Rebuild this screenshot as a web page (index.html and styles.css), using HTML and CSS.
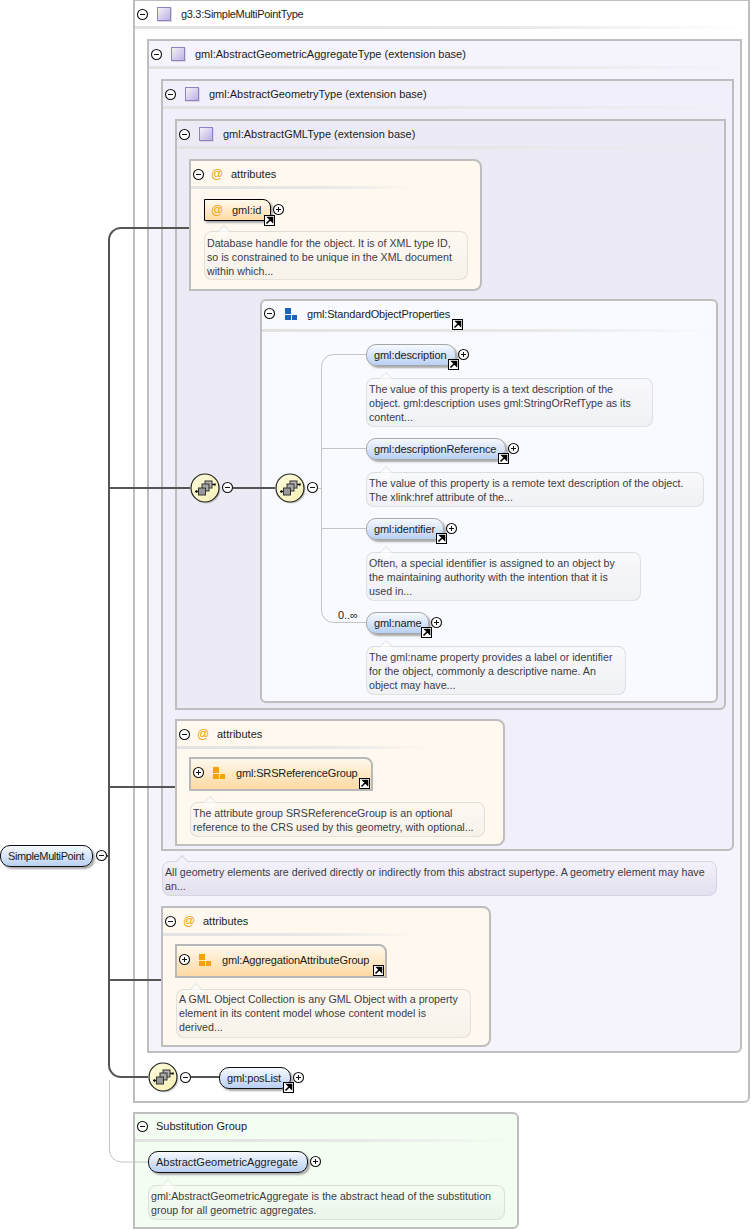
FILE: index.html
```html
<!DOCTYPE html>
<html lang="en">
<head>
<meta charset="utf-8">
<title>SimpleMultiPoint</title>
<link rel="stylesheet" href="styles.css">
</head>
<body>
<svg class="defs" width="0" height="0" aria-hidden="true">
  <defs>
    <symbol id="minus" viewBox="0 0 13 13"><circle cx="6.5" cy="6.5" r="5" fill="#fff" stroke="#111" stroke-width="1.1"/><path d="M4 6.5h5" stroke="#111" stroke-width="1"/></symbol>
    <symbol id="plus" viewBox="0 0 13 13"><circle cx="6.5" cy="6.5" r="5" fill="#fff" stroke="#111" stroke-width="1.1"/><path d="M4 6.5h5M6.5 4v5" stroke="#111" stroke-width="1"/></symbol>
    <symbol id="link" viewBox="0 0 11 11"><rect x=".5" y=".5" width="10" height="10" fill="#fff" stroke="#000"/><path d="M2.5 8.5 6.5 4.5M4.2 2.5h4.3v4.3z" fill="#000" stroke="#000" stroke-width="1.6"/></symbol>
    <linearGradient id="seqfill" x1="0" y1="0" x2="1" y2="1"><stop offset="0" stop-color="#fdfbdc"/><stop offset="1" stop-color="#f6f0b4"/></linearGradient>
    <symbol id="seq" viewBox="0 0 32 32">
      <circle cx="16.5" cy="16.5" r="14" fill="#a8a8a8" opacity=".55"/>
      <circle cx="15" cy="15" r="14" fill="url(#seqfill)" stroke="#222" stroke-width="1.2"/>
      <path d="M5 18.500h4M21 11.500h4.500" stroke="#111" stroke-width="1.4"/>
      <path d="M6 18.500h1M24.500 11.500h1" stroke="#111" stroke-width="2.600"/>
      <rect x="15" y="8" width="7" height="7" fill="#b4b4b4" stroke="#333"/>
      <rect x="12" y="11" width="7" height="7" fill="#a8a8a8" stroke="#333"/>
      <rect x="8.500" y="15" width="7" height="7" fill="#999" stroke="#333"/>
    </symbol>
  </defs>
</svg>
<main class="canvas">
  <div class="frame f1">
    <header class="head"><svg class="tog"><use href="#minus"/></svg><i class="ticon"></i><span class="ttl narrow">g3.3:SimpleMultiPointType</span></header>
    <section class="frame f2">
      <header class="head"><svg class="tog"><use href="#minus"/></svg><i class="ticon"></i><span class="ttl">gml:AbstractGeometricAggregateType (extension base)</span></header>
      <section class="frame f3">
        <header class="head"><svg class="tog"><use href="#minus"/></svg><i class="ticon"></i><span class="ttl">gml:AbstractGeometryType (extension base)</span></header>
        <section class="frame f4">
          <header class="head"><svg class="tog"><use href="#minus"/></svg><i class="ticon"></i><span class="ttl">gml:AbstractGMLType (extension base)</span></header>
          <section class="frame attr a1">
            <header class="head short"><svg class="tog"><use href="#minus"/></svg><b class="at">@</b><span class="ttl">attributes</span></header>
            <div class="anode"><b class="at">@</b><span>gml:id</span><svg class="lnk"><use href="#link"/></svg><svg class="after"><use href="#plus"/></svg></div>
            <p class="doc d-id">Database handle for the object. It is of XML type ID,<br>so is constrained to be unique in the XML document<br>within which...</p>
          </section>
          <div class="seqrow">
            <svg class="seq"><use href="#seq"/></svg><svg class="tog seqtog"><use href="#minus"/></svg>
            <svg class="seq seq2"><use href="#seq"/></svg><svg class="tog seqtog over"><use href="#minus"/></svg>
            <section class="frame props">
              <header class="head"><svg class="tog"><use href="#minus"/></svg><i class="gicon blue"><u></u><u></u><u></u></i><span class="ttl">gml:StandardObjectProperties</span><svg class="lnk lnk-head"><use href="#link"/></svg></header>
              <div class="list">
                <div class="el opt wide">gml:description<svg class="lnk"><use href="#link"/></svg><svg class="after"><use href="#plus"/></svg></div>
                <p class="doc d1">The value of this property is a text description of the<br>object. gml:description uses gml:StringOrRefType as its<br>content...</p>
                <div class="el opt wide">gml:descriptionReference<svg class="lnk"><use href="#link"/></svg><svg class="after"><use href="#plus"/></svg></div>
                <p class="doc d2">The value of this property is a remote text description of the object.<br>The xlink:href attribute of the...</p>
                <div class="el opt">gml:identifier<svg class="lnk"><use href="#link"/></svg><svg class="after"><use href="#plus"/></svg></div>
                <p class="doc d3">Often, a special identifier is assigned to an object by<br>the maintaining authority with the intention that it is<br>used in...</p>
                <div class="el opt nm">gml:name<svg class="lnk"><use href="#link"/></svg><svg class="after"><use href="#plus"/></svg><span class="card">0..∞</span></div>
                <p class="doc d4">The gml:name property provides a label or identifier<br>for the object, commonly a descriptive name. An<br>object may have...</p>
              </div>
            </section>
          </div>
        </section>
        <section class="frame attr a2">
          <header class="head short"><svg class="tog"><use href="#minus"/></svg><b class="at">@</b><span class="ttl">attributes</span></header>
          <div class="gnode g-srs"><svg class="tog"><use href="#plus"/></svg><i class="gicon"><u></u><u></u><u></u></i><span>gml:SRSReferenceGroup</span><svg class="lnk"><use href="#link"/></svg></div>
          <p class="doc d-srs">The attribute group SRSReferenceGroup is an optional<br>reference to the CRS used by this geometry, with optional...</p>
        </section>
      </section>
      <p class="doc lilac">All geometry elements are derived directly or indirectly from this abstract supertype. A geometry element may have<br>an...</p>
      <section class="frame attr a3">
        <header class="head short"><svg class="tog"><use href="#minus"/></svg><b class="at">@</b><span class="ttl">attributes</span></header>
        <div class="gnode g-agg"><svg class="tog"><use href="#plus"/></svg><i class="gicon"><u></u><u></u><u></u></i><span>gml:AggregationAttributeGroup</span><svg class="lnk"><use href="#link"/></svg></div>
        <p class="doc d-agg">A GML Object Collection is any GML Object with a property<br>element in its content model whose content model is<br>derived...</p>
      </section>
    </section>
    <div class="posrow">
      <svg class="seq"><use href="#seq"/></svg><svg class="tog seqtog"><use href="#minus"/></svg>
      <div class="el req pos">gml:posList<svg class="lnk"><use href="#link"/></svg><svg class="after"><use href="#plus"/></svg></div>
    </div>
  </div>
  <section class="frame sub">
    <header class="head"><svg class="tog"><use href="#minus"/></svg><span class="ttl">Substitution Group</span></header>
    <div class="el req abs">AbstractGeometricAggregate<svg class="after"><use href="#plus"/></svg></div>
    <p class="doc d-sub">gml:AbstractGeometricAggregate is the abstract head of the substitution<br>group for all geometric aggregates.</p>
  </section>
  <svg class="wires" width="751" height="1230" aria-hidden="true">
    <g fill="none" stroke="#c4c4c4" stroke-width="1">
      <path d="M109.500 1080V1150a12 12 0 0 0 12 12H148"/>
      <path d="M366 354.500H333.500a12 12 0 0 0-12 12V610.500a12 12 0 0 0 12 12H366"/>
      <path d="M321 448.500H366M321 528.500H366M318 488.500H321"/>
    </g>
    <g fill="none" stroke="#555" stroke-width="2">
      <path d="M189 228H121a12 12 0 0 0-12 12V1065a12 12 0 0 0 12 12H148"/>
      <path d="M109 488H190M109 787H175M109 980H161M106 856H109M233 488H275M191 1077H219"/>
    </g>
  </svg>
  <div class="el req rootel">SimpleMultiPoint<svg class="after rootplus"><use href="#minus"/></svg></div>
</main>
</body>
</html>
```
FILE: styles.css
```css
* { box-sizing: border-box; }
html, body { margin: 0; padding: 0; background: #fff; }
.defs { position: absolute; }
.canvas {
  position: relative;
  width: 751px;
  height: 1230px;
  overflow: hidden;
  font: 11px/14px "Liberation Sans", Arial, sans-serif;
  color: #1c1c1c;
}
.frame { border: 2px solid #bebebe; }
.f1 {
  width: 617px;
  height: 1104px;
  margin: -1px 0 0 133px;
  background: #fff;
  border-radius: 0 0 6px 0;
}
.f2 {
  width: 595px;
  height: 1014px;
  margin: 10px 0 0 12px;
  background: #f5f3fb;
  border-radius: 0 0 6px 0;
}
.f3 {
  width: 573px;
  height: 772px;
  margin: 10px 0 0 12px;
  background: #f1eff9;
  border-radius: 0 0 6px 0;
}
.f4 {
  width: 551px;
  height: 591px;
  margin: 10px 0 0 12px;
  background: #ecebf5;
  border-radius: 0 0 6px 0;
}
.head {
  position: relative;
  display: flex;
  align-items: center;
  height: 28px;
  padding: 0 0 2px 1px;
  background: linear-gradient(90deg, #e2e2e2, #e8e8e8 60%, rgba(232, 232, 232, 0)) left bottom / 100% 3px no-repeat;
  font-size: 11px;
}
.sub .head { padding-bottom: 4px; }
.short { background-size: 78% 3px; }
.tog { width: 13px; height: 13px; flex: none; }
.ticon {
  flex: none;
  width: 14px;
  height: 14px;
  margin-left: 8px;
  border: 1px solid #9080c4;
  background: linear-gradient(135deg, #f4f2fb, #bcb0e0);
  box-shadow: 1px 1px 0 #d8d8d8;
}
.ttl { margin-left: 10px; white-space: nowrap; }
.narrow { letter-spacing: -.32px; }
.sub .ttl { margin-left: 7px; }
.at { width: 12px; margin-left: 6px; font-weight: 400; font-size: 12px; color: #f0a010; text-align: center; }
.attr { background: #fef8ee; border-radius: 0 8px 8px 0; }
.a1 { width: 293px; height: 132px; margin: 10px 0 0 12px; }
.a2 { width: 330px; height: 127px; margin: 9px 0 0 12px; }
.a3 { width: 330px; height: 141px; margin: 10px 0 0 12px; }
.attr .ttl { margin-left: 8px; }
.anode {
  position: relative;
  display: flex;
  align-items: center;
  width: 67px;
  height: 22px;
  margin: 10px 0 0 13px;
  border: 1px solid #000;
  border-radius: 0 8px 0 0;
  background: linear-gradient(#fff9ef, #ffdba2);
  box-shadow: 2px 2px 2px #aaa;
}
.anode .at { margin-right: 9px; }
.anode .lnk { right: -5px; bottom: -6px; }
.doc {
  position: relative;
  margin: 0;
  padding: 3px 0 0 2px;
  border: 1px solid rgba(160, 160, 160, .25);
  border-radius: 8px;
  background: linear-gradient(rgba(255, 255, 255, .2), rgba(200, 200, 200, .12));
  font-size: 10.67px;
  line-height: 14px;
  color: #3c3c44;
  white-space: nowrap;
}
.doc::before {
  content: "";
  position: absolute;
  top: -5px;
  left: 14px;
  width: 9px;
  height: 9px;
  transform: rotate(45deg);
  background: #fff;
  border-top: 1px solid #ddd;
  border-left: 1px solid #ddd;
  opacity: .6;
}
.d-id { width: 264px; height: 49px; margin: 10px 0 0 13px; padding-top: 4px; background-color: #fdf7ee; }
.seqrow { display: flex; align-items: flex-start; margin: 8px 0 0 13px; }
.seq { width: 32px; height: 32px; flex: none; margin-top: 174px; position: relative; z-index: 2; }
.seqtog { margin: 182px 0 0 -1px; position: relative; z-index: 2; }
.seq2 { margin-left: 41px; }
.props {
  width: 458px;
  height: 404px;
  margin-left: -59px;
  background: #f9faff;
  border-radius: 6px;
  flex: none;
}
.props .head { height: 31px; padding-bottom: 6px; }
.gicon {
  flex: none;
  position: relative;
  display: block;
  width: 12px;
  height: 12px;
  margin-left: 9px;
}
.gicon u { position: absolute; background: #f5a00f; }
.gicon.blue u { background: #1e63b5; }
.gicon u:nth-child(1) { left: 0; top: 0; width: 6px; height: 6px; }
.gicon u:nth-child(2) { left: 0; bottom: 0; width: 6px; height: 5px; }
.gicon u:nth-child(3) { right: 0; bottom: 0; width: 5px; height: 5px; }
.props .ttl { margin-left: 10px; letter-spacing: -.15px; }
.lnk { position: absolute; width: 11px; height: 11px; }
.lnk-head { left: 190px; top: 18px; }
.list { padding: 12px 0 0 104px; }
.el {
  position: relative;
  display: inline-flex;
  align-items: center;
  height: 22px;
  padding: 0 8px 0 7px;
  border-radius: 10px;
  background: linear-gradient(#f6f9fe, #b9d0f2);
  box-shadow: 2px 2px 2px #a9a9a9;
  white-space: nowrap;
}
.opt { border: 1px solid #a6a6a6; letter-spacing: -.1px; }
.wide { padding-right: 9px; }
.nm { padding-right: 6px; }
.req { border: 1px solid #111; }
.el .lnk { right: -4px; bottom: -5px; }
.after { position: absolute; width: 13px; height: 13px; right: -15px; top: 3px; }
.list .doc { margin-top: 12px; margin-bottom: 11px; background-color: #f6f7fb; }
.d1 { width: 287px; height: 49px; }
.d2 { width: 338px; height: 35px; }
.d3 { width: 275px; height: 49px; }
.d4 { width: 260px; height: 49px; }
.card { position: absolute; left: -29px; top: -5px; font-size: 11px; }
.gnode {
  position: relative;
  display: flex;
  align-items: center;
  height: 34px;
  margin: 8px 0 0 12px;
  padding: 0 0 3px 1px;
  border: 2px solid #b8b8b8;
  border-radius: 0 8px 0 0;
  background: linear-gradient(#fff8ec, #fdd9a2);
  letter-spacing: -.15px;
}
.gnode span { margin-left: 11px; }
.gnode .gicon { margin-left: 8px; }
.g-srs { width: 184px; }
.g-agg { width: 212px; }
.gnode .lnk { right: 1px; bottom: 0; }
.d-srs { width: 295px; height: 35px; margin: 11px 0 0 13px; background-color: #fdf7ee; }
.d-agg { width: 295px; height: 49px; margin: 11px 0 0 13px; padding-top: 2px; background-color: #fdf7ee; }
.lilac {
  width: 555px;
  height: 35px;
  margin: 10px 0 0 13px;
  background: linear-gradient(#f3f1fa, #e3e0ef);
  border-color: #d6d4e2;
}
.lilac::before { background: #f3f1fa; border-color: #d6d4e2; opacity: 1; }
.posrow { position: relative; display: flex; align-items: flex-start; margin: 9px 0 0 13px; }
.posrow .seq { margin-top: 0; }
.posrow .seqtog { margin: 9px 0 0 -1px; }
.pos { margin: 5px 0 0 27px; padding-right: 9px; letter-spacing: -.15px; }
.sub {
  position: relative;
  width: 386px;
  height: 117px;
  margin: 9px 0 0 133px;
  background: #f3fdf2;
  border-radius: 0 6px 6px 0;
}
.abs { margin: 9px 0 0 13px; padding-right: 9px; }
.d-sub { width: 357px; height: 35px; margin: 12px 0 0 13px; background-color: #f1fbef; }
.wires { position: absolute; left: 0; top: 0; pointer-events: none; }
.rootel { position: absolute; left: 0; top: 845px; letter-spacing: -.38px; }
.rootplus { right: -16px; top: 3px; }
```
